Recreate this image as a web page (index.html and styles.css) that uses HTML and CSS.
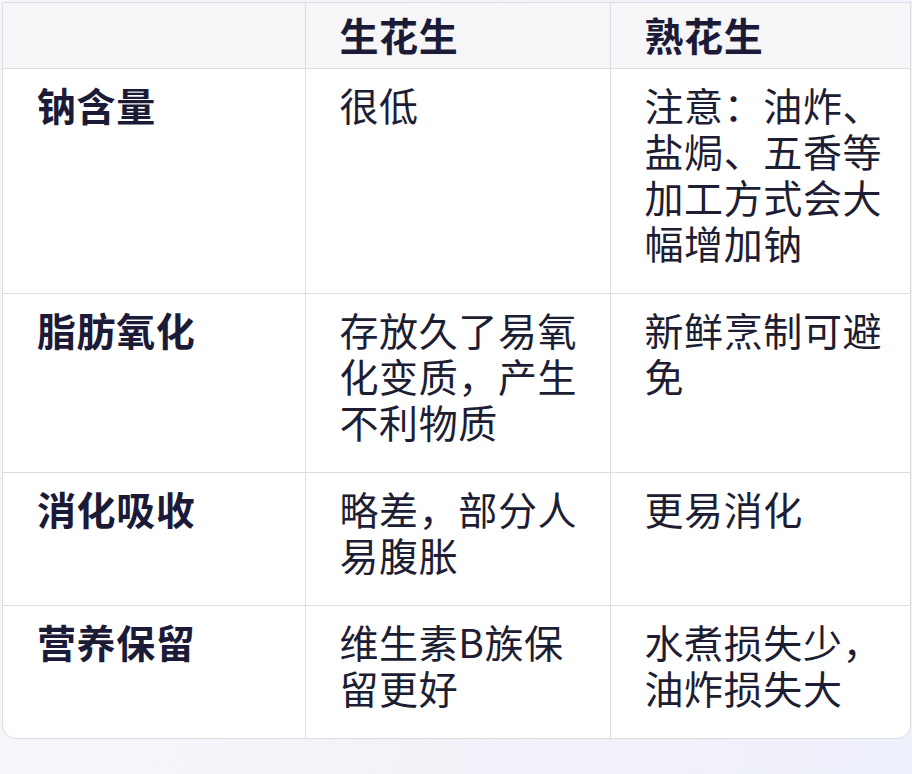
FILE: index.html
```html
<!DOCTYPE html>
<html lang="zh-CN">
<head>
<meta charset="utf-8">
<title>生花生 vs 熟花生</title>
<link rel="stylesheet" href="styles.css">
</head>
<body>
<div class="card">
  <table class="cmp">
    <colgroup>
      <col class="c1"><col class="c2"><col class="c3">
    </colgroup>
    <thead>
      <tr><th></th><th>生花生</th><th>熟花生</th></tr>
    </thead>
    <tbody>
      <tr><td class="key">钠含量</td><td>很低</td><td>注意：油炸、盐焗、五香等加工方式会大幅增加钠</td></tr>
      <tr><td class="key">脂肪氧化</td><td>存放久了易氧化变质，产生不利物质</td><td>新鲜烹制可避免</td></tr>
      <tr><td class="key">消化吸收</td><td>略差，部分人易腹胀</td><td>更易消化</td></tr>
      <tr><td class="key">营养保留</td><td>维生素B族保留更好</td><td>水煮损失少，油炸损失大</td></tr>
    </tbody>
  </table>
</div>
</body>
</html>
```
FILE: styles.css
```css
html, body {
  margin: 0;
  padding: 0;
}
body {
  width: 912px;
  height: 774px;
  overflow: hidden;
  background: linear-gradient(90deg, #f6f6fa 0%, #f1f1f9 60%, #eef0fb 100%);
  font-family: "Noto Sans CJK SC", "Noto Sans", sans-serif;
  color: #1d1d33;
}
.card {
  margin: 2px 0 0 2px;
  width: 907px;
  border: 1px solid #dcdce1;
  border-radius: 0 0 14px 14px;
  overflow: hidden;
  background: #ffffff;
}
.cmp {
  width: 100%;
  border-collapse: collapse;
  table-layout: fixed;
  font-size: 39px;
  line-height: 46px;
  letter-spacing: 0.6px;
}
.c1 { width: 302px; }
.c2 { width: 305px; }
.c3 { width: 300px; }
.cmp th {
  background: #f6f6f9;
  font-weight: 700;
  text-align: left;
  padding: 8px 16px 11px 34px;
  color: #1b1b38;
}
.cmp td {
  vertical-align: top;
  padding: 12px 16px 28px 34px;
  border-top: 1px solid #dcdce1;
  font-weight: 400;
}
.cmp th + th,
.cmp td + td {
  border-left: 1px solid #dcdce1;
}
.cmp td.key {
  font-weight: 700;
  color: #1b1b38;
}
```
